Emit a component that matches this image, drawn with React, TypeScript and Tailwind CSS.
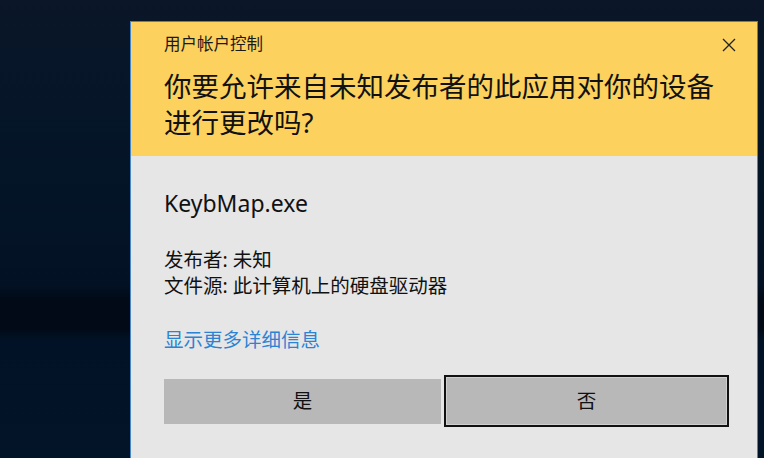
import React from "react";

export default function App() {
  const font = "font-['Noto_Sans','Noto_Sans_CJK_SC',sans-serif]";
  return (
    <div
      className={`w-[764px] h-[458px] overflow-hidden flex pl-[130px] pt-[21px] bg-[linear-gradient(180deg,#0b1628_0px,#071629_60px,#041427_200px,#031124_285px,#010a16_300px,#010a16_328px,#021226_340px,#021428_100%)] ${font}`}
    >
      <div className="w-[628px] h-[460px] shrink-0 border border-[#4a86c4] flex flex-col bg-[#e6e6e6]">
        {/* Header */}
        <div className="bg-[#fdd15d] pl-[33px] pr-[20px] pt-[11px] pb-[15px] flex flex-col">
          <div className="flex items-center justify-between">
            <span className="text-[16.5px] leading-[22px] text-[#1a1a1a]">用户帐户控制</span>
            <svg width="14" height="14" viewBox="0 0 14 14" className="mr-[1px] mt-[1px]">
              <path d="M1 1 L13 13 M13 1 L1 13" stroke="#222" strokeWidth="1.3" fill="none" />
            </svg>
          </div>
          <div className="mt-[14px] w-[570px] text-[27.5px] leading-[36px] text-[#111]">
            你要允许来自未知发布者的此应用对你的设备进行更改吗?
          </div>
        </div>
        {/* Body */}
        <div className="pl-[33px] flex flex-col">
          <div className="mt-[32px] text-[23px] leading-[30px] text-[#111]">KeybMap.exe</div>
          <div className="mt-[29px] text-[19.5px] leading-[26px] text-[#111]">
            <div>发布者: 未知</div>
            <div>文件源: 此计算机上的硬盘驱动器</div>
          </div>
          <div className="mt-[28px] text-[19.5px] leading-[26px] text-[#2b83d4]">显示更多详细信息</div>
          <div className="mt-[22px] flex items-center">
            <div className="w-[277px] h-[45px] bg-[#b8b8b8] flex items-center justify-center text-[19.5px] text-[#111]">
              是
            </div>
            <div className="ml-[3px] w-[285px] h-[52px] border-2 border-[#111] shadow-[inset_0_0_0_1px_#cfcfcf] bg-[#b8b8b8] flex items-center justify-center text-[19.5px] text-[#111]">
              否
            </div>
          </div>
        </div>
      </div>
    </div>
  );
}
